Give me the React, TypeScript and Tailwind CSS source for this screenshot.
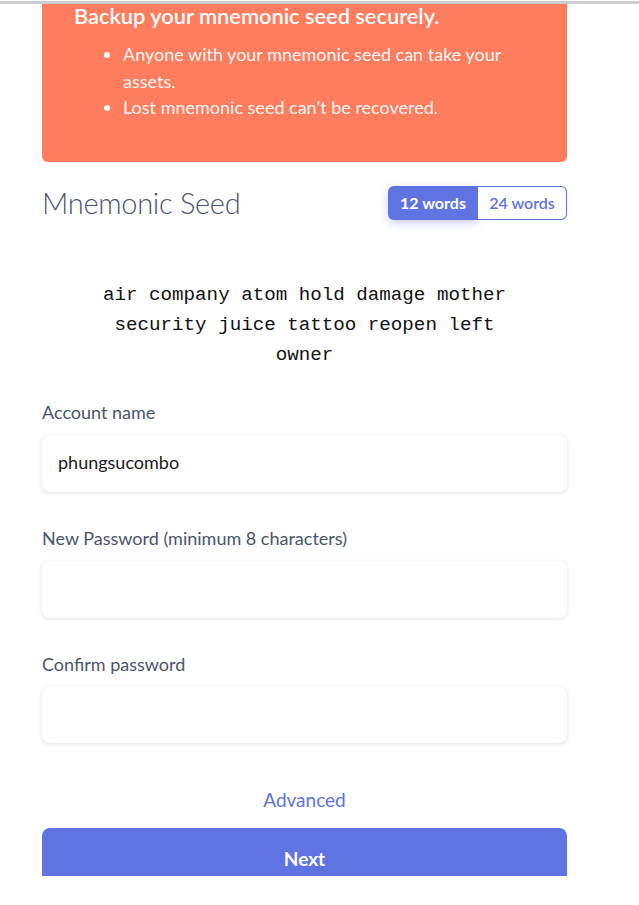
import React from "react";

export default function App() {
  const sans = { fontFamily: "Lato, 'Noto Sans', sans-serif" };
  return (
    <div className="w-[639px] min-h-[905px] bg-white" style={sans}>
      <div className="h-[1px] bg-white" />
      <div className="h-[3px] bg-[#cdcdcd]" />
      <div className="ml-[42px] w-[525px]">
        <div className="bg-[#fd7d5e] rounded-b-[6px] pl-[32px] pr-[24px] pb-[41px] text-white">
          <div className="text-[21.8px] leading-[24px] font-semibold">Backup your mnemonic seed securely.</div>
          <ul className="mt-[13px] pl-[49px] list-disc text-[18px] leading-[26.5px] text-white/95">
            <li>Anyone with your mnemonic seed can take your assets.</li>
            <li>Lost mnemonic seed can't be recovered.</li>
          </ul>
        </div>

        <div className="mt-[24px] flex items-center justify-between h-[34px]">
          <div className="text-[29px] font-light text-[#4a5573] tracking-[-0.3px]">Mnemonic Seed</div>
          <div className="flex h-[34px] text-[16px] font-bold">
            <div className="w-[90px] flex items-center justify-center bg-[#5f73e2] text-white rounded-l-[6px] shadow-[0_3px_8px_rgba(95,115,226,0.35)]">12 words</div>
            <div className="w-[89px] flex items-center justify-center bg-white text-[#5f73e2] border border-[#5f73e2] border-l-0 rounded-r-[6px] font-semibold">24 words</div>
          </div>
        </div>

        <div
          className="mt-[60px] mx-auto w-[430px] text-center text-[19.2px] leading-[30px] text-[#111]"
          style={{ fontFamily: "'Liberation Mono', 'Courier New', monospace" }}
        >
          air company atom hold damage mother security juice tattoo reopen left owner
        </div>

        <div className="mt-[30px] text-[18px] leading-[24px] text-[#4a5568]">Account name</div>
        <div className="mt-[11px] h-[57px] rounded-[8px] bg-white shadow-[0_1px_4px_rgba(0,0,0,0.12)] flex items-center px-[16px] text-[18px] text-[#1a1a1a] pb-[1px]">
          phungsucombo
        </div>

        <div className="mt-[34px] text-[18px] leading-[24px] text-[#4a5568]">New Password (minimum 8 characters)</div>
        <div className="mt-[11px] h-[57px] rounded-[8px] bg-white shadow-[0_1px_4px_rgba(0,0,0,0.12)]" />

        <div className="mt-[34px] text-[18px] leading-[24px] text-[#4a5568]">Confirm password</div>
        <div className="mt-[11px] h-[56px] rounded-[8px] bg-white shadow-[0_1px_4px_rgba(0,0,0,0.12)]" />

        <div className="mt-[45px] text-center text-[19px] leading-[24px] text-[#5f73e2]">Advanced</div>

        <div className="mt-[16px] h-[48px] overflow-hidden">
          <div className="h-[64px] rounded-[8px] bg-[#5f73e2] flex items-center justify-center text-white text-[19px] font-bold">
            Next
          </div>
        </div>
      </div>
    </div>
  );
}
